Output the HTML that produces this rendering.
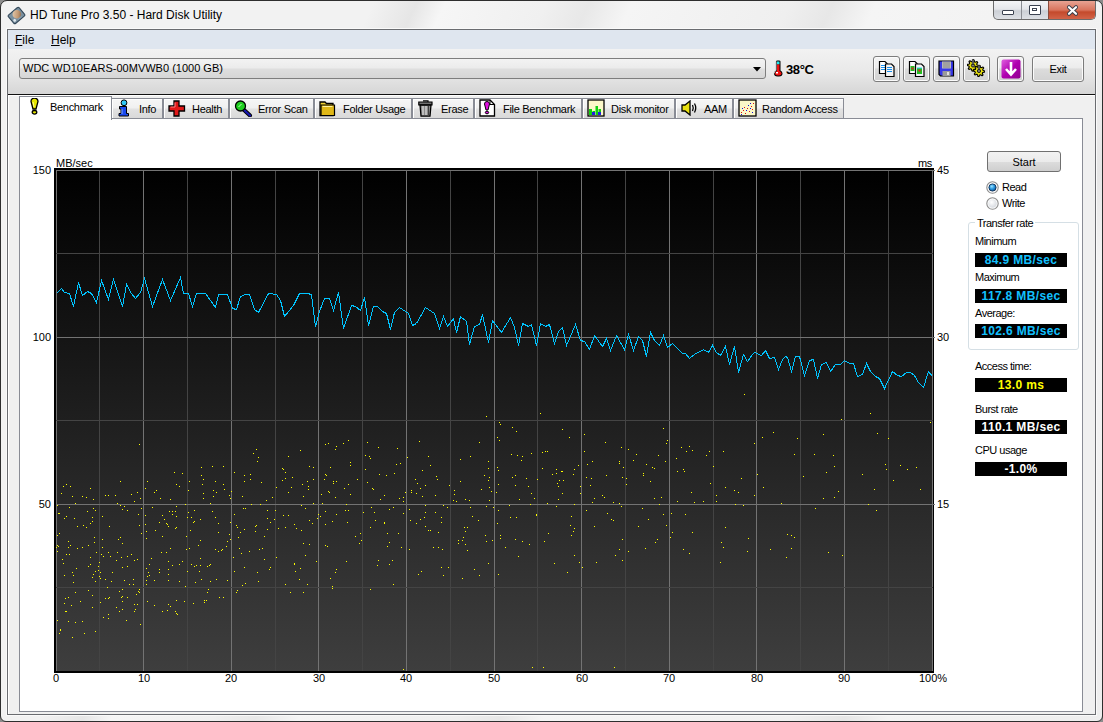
<!DOCTYPE html>
<html><head><meta charset="utf-8">
<style>
*{box-sizing:border-box}
html,body{margin:0;padding:0;width:1103px;height:722px;overflow:hidden;background:#8c8c8c}
body{font-family:"Liberation Sans",sans-serif;font-size:11px;color:#000;position:relative}
.a{position:absolute}
#win{position:absolute;left:0;top:0;width:1103px;height:722px;border:1px solid #2e2e2e;border-radius:7px 7px 6px 6px;background:linear-gradient(115deg,#f2f2f2 0%,#f2f2f2 26%,#e6e6e6 29%,#f6f6f6 31%,#f0f0f0 38%,#e8e8e8 41%,#f5f5f5 44%,#efefef 55%,#e7e7e7 58%,#f5f5f5 61%,#f1f1f1 78%,#e6e6e6 82%,#f4f4f4 85%,#eeeeee)}
#client{position:absolute;left:7px;top:29px;width:1089px;height:686px;border:1px solid #6a6c70;background:#f0f0f0;box-shadow:0 0 0 1px #fafafa, inset 1px 0 0 #fff}
#title{position:absolute;left:30px;top:8px;font-size:12px;color:#000;white-space:nowrap}
#menubar{position:absolute;left:8px;top:30px;width:1087px;height:19px;background:#dfe6ef}
.menu{position:absolute;top:33px;font-size:12px}
#toolbar{position:absolute;left:8px;top:49px;width:1087px;height:46px;background:linear-gradient(#f2f2f2,#e9e9e9 50%,#d6d6d6);border-bottom:1px solid #111}
#tbhl{position:absolute;left:8px;top:95px;width:1087px;height:1px;background:#fff}
#combo{position:absolute;left:19px;top:58px;width:747px;height:21px;border:1px solid #7e7e7e;border-radius:3px;background:linear-gradient(#f3f3f3,#ececec 45%,#dedede 55%,#d6d6d6)}
.tbtn{position:absolute;top:56px;width:27px;height:26px;border:1px solid #7c7c7c;border-radius:3px;background:linear-gradient(#f4f4f4,#ececec 45%,#dcdcdc 50%,#d2d2d2);box-shadow:inset 0 0 0 1px #fbfbfb}
.tab{position:absolute;top:98px;height:21px;border:1px solid #898c95;border-bottom:none;background:linear-gradient(#f6f6f6,#f0f0f0 45%,#e2e2e2 50%,#d8d8d8);box-shadow:inset 1px 1px 0 #fff}
.tab .t{position:absolute;top:3px;white-space:nowrap;font-size:12px}
#panel{position:absolute;left:19px;top:118px;width:1064px;height:594px;border:1px solid #898c95;background:#fff}
.lbl{position:absolute;font-size:11px;letter-spacing:-0.5px;white-space:nowrap}
.box{position:absolute;left:975px;width:92px;height:14px;background:#000;color:#fff;font-weight:bold;font-size:12px;letter-spacing:0.35px;text-align:center;line-height:15px;white-space:nowrap}
.ax{position:absolute;font-size:11px;white-space:nowrap;line-height:11px}
.tl{position:absolute;font-size:11px;letter-spacing:-0.3px;white-space:nowrap}
</style></head><body>
<div id="win"></div>
<!-- window icon -->
<svg class="a" style="left:7px;top:6px" width="19" height="19" viewBox="0 0 19 19">
  <defs><linearGradient id="plat" x1="0" y1="0" x2="1" y2="1"><stop offset="0" stop-color="#e8d2b8"/><stop offset=".6" stop-color="#c49a74"/><stop offset="1" stop-color="#7a5a40"/></linearGradient></defs>
  <g transform="rotate(-40 9.5 9.5)"><rect x="2.5" y="4" width="14" height="11" rx="1.5" fill="#7a90a0" stroke="#34495a" stroke-width="1.1"/><circle cx="10.5" cy="8.8" r="4.3" fill="url(#plat)"/><circle cx="5" cy="12" r="1.4" fill="#dfe8ee"/><path d="M8 13.5 H13" stroke="#8aa0b0" stroke-width="1"/></g>
</svg>
<div id="title">HD Tune Pro 3.50 - Hard Disk Utility</div>
<!-- caption buttons -->
<div class="a" style="left:993px;top:1px;width:103px;height:19px;border:1px solid #6b6b6b;border-top:none;border-radius:0 0 5px 5px;overflow:hidden;background:linear-gradient(#f4f5f7,#e4e6ea 45%,#ccd0d6 55%,#dde0e5)">
  <div class="a" style="left:27px;top:0;width:1px;height:20px;background:#8a8d93"></div>
  <div class="a" style="left:54px;top:0;width:49px;height:20px;background:linear-gradient(#e8a393,#d9745d 45%,#c44a2c 55%,#d66a50);border-left:1px solid #8a4c3c"></div>
  <div class="a" style="left:8px;top:9px;width:12px;height:5px;border:1.5px solid #3b4250;border-radius:1px;background:#fff"></div>
  <div class="a" style="left:35px;top:4px;width:12px;height:10px;border:1.5px solid #3b4250;border-radius:1px;background:#fff"><div class="a" style="left:2px;top:2px;width:5px;height:3px;border:1px solid #3b4250"></div></div>
  <svg class="a" style="left:72px;top:3px" width="13" height="13" viewBox="0 0 13 13"><path d="M3 3.2 L10 9.8 M10 3.2 L3 9.8" stroke="#3a3f4a" stroke-width="4" stroke-linecap="round"/><path d="M3 3.2 L10 9.8 M10 3.2 L3 9.8" stroke="#fff" stroke-width="2.2" stroke-linecap="round"/></svg>
</div>

<div id="client"></div>
<div id="menubar"></div>
<div class="menu" style="left:15px"><u>F</u>ile</div>
<div class="menu" style="left:51px"><u>H</u>elp</div>
<div id="toolbar"></div><div id="tbhl"></div>
<div id="combo"></div>
<div class="a" style="left:23px;top:62px;font-size:11px;white-space:nowrap">WDC WD10EARS-00MVWB0 (1000 GB)</div>
<svg class="a" style="left:753px;top:67px" width="9" height="6"><path d="M0 0H8L4 4.5Z" fill="#000"/></svg>
<!-- thermometer -->
<svg class="a" style="left:773px;top:60px" width="10" height="17" viewBox="0 0 10 17">
  <path d="M3 1.5 Q3 0.5 4.5 0.5 H6 Q7.5 0.5 7.5 1.5 V10.5 Q9.5 11.5 9.5 13.5 Q9.5 16.5 6 16.5 H4.5 Q1 16.5 1 13.5 Q1 11.5 3 10.5 Z" fill="#000"/>
  <rect x="4" y="1.5" width="2.5" height="3" fill="#20e8f0"/><rect x="4" y="4.5" width="2.5" height="7" fill="#f01010"/>
  <path d="M2 13.5 Q2 11.5 4 11 H6.5 Q8.5 11.5 8.5 13.5 Q8.5 15.5 6 15.5 H4.5 Q2 15.5 2 13.5Z" fill="#f01010"/>
  <path d="M3 1.5 V10.5 Q1 11.5 1 13.5" stroke="#c8c8c8" stroke-width="1" fill="none"/><rect x="3" y="12" width="2" height="1.5" fill="#fff"/>
</svg>
<div class="a" style="left:786px;top:62px;font-size:13px;font-weight:bold;letter-spacing:-0.4px">38°C</div>
<div class="tbtn" style="left:873px"></div>
<div class="tbtn" style="left:903px"></div>
<div class="tbtn" style="left:933px"></div>
<div class="tbtn" style="left:963px"></div>
<div class="tbtn" style="left:997px"></div>
<svg class="a" style="left:878px;top:60px" width="18" height="18" viewBox="0 0 18 18"><path d="M1.5 1.5 H7 L9 3.5 V13.5 H1.5 Z" fill="#fff" stroke="#000" stroke-width="1.2"/><path d="M2.5 5.5 H6.5 M2.5 7.5 H6.5 M2.5 9.5 H6.5" stroke="#1890f0" stroke-width="1" shape-rendering="crispEdges"/><path d="M7.5 4 H13.5 L16 6.5 V16.5 H7.5 Z" fill="#f4f4f4" stroke="#000" stroke-width="1.2"/><path d="M9 7.5 H14 M9 9.5 H14 M9 11.5 H14" stroke="#1890f0" stroke-width="1" shape-rendering="crispEdges"/></svg>
<svg class="a" style="left:908px;top:60px" width="18" height="18" viewBox="0 0 18 18"><path d="M1.5 1.5 H7 L9 3.5 V13.5 H1.5 Z" fill="#fff" stroke="#000" stroke-width="1.2"/><rect x="2.5" y="6" width="4" height="5" fill="#20c020"/><rect x="3.5" y="7.5" width="2" height="2" fill="#e02020"/><path d="M7.5 4 H13.5 L16 6.5 V16.5 H7.5 Z" fill="#f4f4f4" stroke="#000" stroke-width="1.2"/><rect x="9" y="8" width="5" height="6" fill="#20c020"/><rect x="10.5" y="9.5" width="2" height="2" fill="#e02020"/><path d="M9 8 H14" stroke="#30d0f0"/></svg>
<svg class="a" style="left:938px;top:60px" width="17" height="17" viewBox="0 0 17 17"><path d="M1 1 H15.5 V16 H2.5 L1 14.5 Z" fill="#3838e8" stroke="#000" stroke-width="1.2"/><rect x="4" y="1.5" width="9" height="7" fill="#b8b8b8"/><path d="M5 3 H12 M5 5 H12 M5 7 H12" stroke="#888" stroke-width="1"/><rect x="4.5" y="11" width="8" height="5" fill="#9a9a9a"/><rect x="9" y="12" width="2" height="3" fill="#e0e0e0"/></svg>
<svg class="a" style="left:967px;top:59px" width="18" height="18" viewBox="0 0 18 18"><g fill="#e8e010" stroke="#000" stroke-width="1.1" stroke-linejoin="round"><path d="M11.6 6.5 L11.5 7.6 L9.7 8.0 L9.3 8.7 L10.0 10.5 L9.1 11.2 L7.5 10.2 L6.8 10.4 L6.0 12.1 L4.9 12.0 L4.5 10.2 L3.8 9.8 L2.0 10.5 L1.3 9.6 L2.3 8.0 L2.1 7.3 L0.4 6.5 L0.5 5.4 L2.3 5.0 L2.7 4.3 L2.0 2.5 L2.9 1.8 L4.5 2.8 L5.2 2.6 L6.0 0.9 L7.1 1.0 L7.5 2.8 L8.2 3.2 L10.0 2.5 L10.7 3.4 L9.7 5.0 L9.9 5.7Z"/><path d="M17.6 12.0 L17.5 13.1 L15.7 13.5 L15.3 14.2 L16.0 16.0 L15.1 16.7 L13.5 15.7 L12.8 15.9 L12.0 17.6 L10.9 17.5 L10.5 15.7 L9.8 15.3 L8.0 16.0 L7.3 15.1 L8.3 13.5 L8.1 12.8 L6.4 12.0 L6.5 10.9 L8.3 10.5 L8.7 9.8 L8.0 8.0 L8.9 7.3 L10.5 8.3 L11.2 8.1 L12.0 6.4 L13.1 6.5 L13.5 8.3 L14.2 8.7 L16.0 8.0 L16.7 8.9 L15.7 10.5 L15.9 11.2Z"/></g><circle cx="6" cy="6.5" r="1.6" fill="#808080" stroke="#000" stroke-width=".8"/><circle cx="12" cy="12" r="1.6" fill="#808080" stroke="#000" stroke-width=".8"/><path d="M6 0.5 V6 M12 6 V11" stroke="#000" stroke-width="2.2"/><path d="M6 1 V5.5 M12 6.5 V10.5" stroke="#b0b0b0" stroke-width="1"/></svg>
<svg class="a" style="left:1001px;top:59px" width="20" height="20" viewBox="0 0 20 20"><defs><linearGradient id="pg" x1="0" y1="0" x2="1" y2="1"><stop offset="0" stop-color="#e060e0"/><stop offset=".5" stop-color="#b000b0"/><stop offset="1" stop-color="#900090"/></linearGradient></defs><rect x="0.5" y="0.5" width="19" height="19" rx="2" fill="url(#pg)"/><path d="M10 3 V15 M5 10 L10 15.5 L15 10" stroke="#fff" stroke-width="2.6" fill="none"/></svg>
<div class="tbtn" style="left:1032px;width:52px;"><div class="a" style="left:0;width:50px;top:6px;text-align:center;font-size:11px;letter-spacing:-0.3px">Exit</div></div>
<div class="tab" style="left:111px;width:52px"></div>
<div class="tl" style="left:139px;top:103px">Info</div>
<svg class="a" style="left:118px;top:99px" width="12" height="18" viewBox="0 0 12 18"><circle cx="6" cy="3.8" r="2.9" fill="#30c8f8" stroke="#000" stroke-width="1"/><path d="M1.5 7.5 H8.5 V14.5 H10.5 V17 H1 V14.5 H3 V10 H1.5 Z" fill="#1848f0" stroke="#000" stroke-width="1"/><path d="M4 10 V15" stroke="#80a8ff" stroke-width="1"/></svg>
<div class="tab" style="left:163px;width:66px"></div>
<div class="tl" style="left:192px;top:103px">Health</div>
<svg class="a" style="left:168px;top:100px" width="18" height="17" viewBox="0 0 18 17"><path d="M6 1 H11 V6 H16.5 V11 H11 V16 H6 V11 H1 V6 H6 Z" fill="#e01818" stroke="#000" stroke-width="1.3"/><path d="M7 2.5 V7 H2.5" stroke="#ff8080" stroke-width="1" fill="none"/></svg>
<div class="tab" style="left:229px;width:85px"></div>
<div class="tl" style="left:258px;top:103px">Error Scan</div>
<svg class="a" style="left:234px;top:100px" width="19" height="17" viewBox="0 0 19 17"><path d="M9 9 L16 15.5" stroke="#000" stroke-width="4" stroke-linecap="round"/><path d="M9 9 L16 15.5" stroke="#1818b0" stroke-width="2.2" stroke-linecap="round"/><circle cx="6.5" cy="6" r="5" fill="#20d020" stroke="#000" stroke-width="1.3"/><path d="M4.5 7 L7.5 4" stroke="#c0ffc0" stroke-width="1"/></svg>
<div class="tab" style="left:314px;width:98px"></div>
<div class="tl" style="left:343px;top:103px">Folder Usage</div>
<svg class="a" style="left:319px;top:99px" width="17" height="18" viewBox="0 0 17 18"><path d="M1 3 H6 L7.5 4.5 H14 V16.5 H1 Z" fill="#f0d030" stroke="#000" stroke-width="1.3"/><path d="M2 6 H15.5 V16.5 H2 Z" fill="#e0b818" stroke="#000" stroke-width="1.2"/><path d="M3.5 7.5 H13.5" stroke="#fff3a0" stroke-width="1"/></svg>
<div class="tab" style="left:412px;width:62px"></div>
<div class="tl" style="left:441px;top:103px">Erase</div>
<svg class="a" style="left:418px;top:100px" width="15" height="17" viewBox="0 0 15 17"><path d="M0.8 2 H14 V5 H0.8 Z" fill="#707070" stroke="#000" stroke-width="1.2"/><path d="M5 0.8 H10 V2" fill="none" stroke="#000" stroke-width="1.2"/><path d="M2 5 H13 L12 16.2 H3 Z" fill="#8a8a8a" stroke="#000" stroke-width="1.3"/><path d="M5 6 V15 M8 6 V15" stroke="#e0e0e0" stroke-width="1.2"/><path d="M10.5 6 V15" stroke="#404040" stroke-width="1"/></svg>
<div class="tab" style="left:474px;width:108px"></div>
<div class="tl" style="left:503px;top:103px">File Benchmark</div>
<svg class="a" style="left:479px;top:99px" width="17" height="18" viewBox="0 0 17 18"><path d="M1 1 H11 L15.5 5.5 V17 H1 Z" fill="#fff" stroke="#000" stroke-width="1.3"/><path d="M11 1 V5.5 H15.5" fill="none" stroke="#000" stroke-width="1"/><path d="M5.5 5 A2.5 2.5 0 0 1 10.5 5 L9 11 H7 Z" fill="#e010e0" stroke="#000" stroke-width="1"/><ellipse cx="8" cy="13.5" rx="1.7" ry="1.3" fill="#e010e0" stroke="#000" stroke-width="1"/></svg>
<div class="tab" style="left:582px;width:93px"></div>
<div class="tl" style="left:611px;top:103px">Disk monitor</div>
<svg class="a" style="left:587px;top:99px" width="18" height="18" viewBox="0 0 18 18"><rect x="1" y="1" width="16" height="16" fill="#fbf7c8" stroke="#000" stroke-width="1.3"/><path d="M2 10 H5 V16 H2 Z M5.5 12 H8 V16 H5.5 Z M8.5 7 H11 V16 H8.5 Z M11.5 10 H14 V16 H11.5 Z" fill="#10d010"/><path d="M5 13 H8 V16 H5 Z M11 13 H14 V16 H11 Z" fill="#2020e0"/></svg>
<div class="tab" style="left:675px;width:58px"></div>
<div class="tl" style="left:704px;top:103px">AAM</div>
<svg class="a" style="left:681px;top:100px" width="17" height="16" viewBox="0 0 17 16"><path d="M1 5 H4 L9 1 V15 L4 11 H1 Z" fill="#e8e010" stroke="#000" stroke-width="1.3"/><path d="M11.5 5 Q13 8 11.5 11 M13.5 3.5 Q16 8 13.5 12.5" fill="none" stroke="#000" stroke-width="1.3"/></svg>
<div class="tab" style="left:733px;width:111px"></div>
<div class="tl" style="left:762px;top:103px">Random Access</div>
<svg class="a" style="left:738px;top:99px" width="19" height="18" viewBox="0 0 19 18"><rect x="1" y="1" width="17" height="16" fill="#fbf7c8" stroke="#000" stroke-width="1.3"/><path d="M3 13h1v1h-1z M5 11h1v1h-1z M7 14h1v1h-1z M9 9h1v1h-1z M11 12h1v1h-1z M13 7h1v1h-1z M14 10h1v1h-1z M6 8h1v1h-1z M15 4h1v1h-1z" fill="#e01010"/><path d="M4 9h1v1h-1z M8 11h1v1h-1z M10 6h1v1h-1z M12 9h1v1h-1z M14 13h1v1h-1z M12 4h1v1h-1z M3 15h1v1h-1z" fill="#1010e0"/></svg>
<div id="panel"></div>
<div class="a" style="left:19px;top:96px;width:93px;height:24px;border:1px solid #898c95;border-bottom:none;background:#fff"></div><div class="tl" style="left:50px;top:101px">Benchmark</div><svg class="a" style="left:30px;top:98px" width="9" height="17" viewBox="0 0 9 17"><path d="M1 3.5 A3.5 3.5 0 0 1 8 3.5 L6 11 H3 Z" fill="#e8e800" stroke="#000" stroke-width="1.3"/><path d="M3 4 L4 9" stroke="#ffffa0" stroke-width="1"/><ellipse cx="4.5" cy="14.3" rx="2.3" ry="1.8" fill="#e8e800" stroke="#000" stroke-width="1.3"/></svg>
<svg class="a" style="left:0;top:0" width="1103" height="722" shape-rendering="crispEdges">
<defs><linearGradient id="bg" x1="0" y1="0" x2="0" y2="1"><stop offset="0" stop-color="#000"/><stop offset="1" stop-color="#3e3e3e"/></linearGradient></defs>
<rect x="54" y="168" width="880" height="505" fill="#000"/>
<rect x="56" y="170" width="877" height="501" fill="url(#bg)"/>
<rect x="56" y="170" width="1" height="501" fill="#737373"/>
<rect x="99" y="170" width="1" height="501" fill="#444444"/>
<rect x="143" y="170" width="1" height="501" fill="#737373"/>
<rect x="187" y="170" width="1" height="501" fill="#444444"/>
<rect x="231" y="170" width="1" height="501" fill="#737373"/>
<rect x="275" y="170" width="1" height="501" fill="#444444"/>
<rect x="318" y="170" width="1" height="501" fill="#737373"/>
<rect x="362" y="170" width="1" height="501" fill="#444444"/>
<rect x="406" y="170" width="1" height="501" fill="#737373"/>
<rect x="450" y="170" width="1" height="501" fill="#444444"/>
<rect x="494" y="170" width="1" height="501" fill="#737373"/>
<rect x="537" y="170" width="1" height="501" fill="#444444"/>
<rect x="581" y="170" width="1" height="501" fill="#737373"/>
<rect x="625" y="170" width="1" height="501" fill="#444444"/>
<rect x="669" y="170" width="1" height="501" fill="#737373"/>
<rect x="713" y="170" width="1" height="501" fill="#444444"/>
<rect x="756" y="170" width="1" height="501" fill="#737373"/>
<rect x="800" y="170" width="1" height="501" fill="#444444"/>
<rect x="844" y="170" width="1" height="501" fill="#737373"/>
<rect x="888" y="170" width="1" height="501" fill="#444444"/>
<rect x="932" y="170" width="1" height="501" fill="#737373"/>
<rect x="56" y="170" width="879" height="1" fill="#737373"/>
<rect x="56" y="253" width="877" height="1" fill="#444444"/>
<rect x="56" y="337" width="879" height="1" fill="#737373"/>
<rect x="56" y="420" width="877" height="1" fill="#444444"/>
<rect x="56" y="504" width="879" height="1" fill="#737373"/>
<rect x="56" y="587" width="877" height="1" fill="#444444"/>
<path fill="#ffff00" d="M75 622h1v1h-1zM76 568h1v1h-1zM64 575h1v1h-1zM90 523h1v1h-1zM59 533h1v1h-1zM99 576h1v1h-1zM62 559h1v1h-1zM58 513h1v1h-1zM57 545h1v1h-1zM92 577h1v1h-1zM77 548h1v1h-1zM68 621h1v1h-1zM87 511h1v1h-1zM68 597h1v1h-1zM73 582h1v1h-1zM93 508h1v1h-1zM95 631h1v1h-1zM73 575h1v1h-1zM90 488h1v1h-1zM70 545h1v1h-1zM66 484h1v1h-1zM90 564h1v1h-1zM75 592h1v1h-1zM61 493h1v1h-1zM74 518h1v1h-1zM98 570h1v1h-1zM65 611h1v1h-1zM84 633h1v1h-1zM65 598h1v1h-1zM70 486h1v1h-1zM59 513h1v1h-1zM82 547h1v1h-1zM98 566h1v1h-1zM93 499h1v1h-1zM95 510h1v1h-1zM88 566h1v1h-1zM94 542h1v1h-1zM60 629h1v1h-1zM66 516h1v1h-1zM92 521h1v1h-1zM63 486h1v1h-1zM66 611h1v1h-1zM82 621h1v1h-1zM64 518h1v1h-1zM75 503h1v1h-1zM72 496h1v1h-1zM71 605h1v1h-1zM86 497h1v1h-1zM57 620h1v1h-1zM86 527h1v1h-1zM77 526h1v1h-1zM99 562h1v1h-1zM88 590h1v1h-1zM90 557h1v1h-1zM95 571h1v1h-1zM93 574h1v1h-1zM72 572h1v1h-1zM59 633h1v1h-1zM94 537h1v1h-1zM88 545h1v1h-1zM92 595h1v1h-1zM57 551h1v1h-1zM66 554h1v1h-1zM82 496h1v1h-1zM69 507h1v1h-1zM63 563h1v1h-1zM95 581h1v1h-1zM64 603h1v1h-1zM96 552h1v1h-1zM69 554h1v1h-1zM92 607h1v1h-1zM68 547h1v1h-1zM68 541h1v1h-1zM83 525h1v1h-1zM92 517h1v1h-1zM57 535h1v1h-1zM80 601h1v1h-1zM56 547h1v1h-1zM57 505h1v1h-1zM58 546h1v1h-1zM127 597h1v1h-1zM141 508h1v1h-1zM120 481h1v1h-1zM120 505h1v1h-1zM111 581h1v1h-1zM122 589h1v1h-1zM117 552h1v1h-1zM140 498h1v1h-1zM119 611h1v1h-1zM116 607h1v1h-1zM134 560h1v1h-1zM108 598h1v1h-1zM127 510h1v1h-1zM139 589h1v1h-1zM134 611h1v1h-1zM137 492h1v1h-1zM119 591h1v1h-1zM121 597h1v1h-1zM102 516h1v1h-1zM134 501h1v1h-1zM122 601h1v1h-1zM129 584h1v1h-1zM103 556h1v1h-1zM112 572h1v1h-1zM122 543h1v1h-1zM116 560h1v1h-1zM137 559h1v1h-1zM108 552h1v1h-1zM126 620h1v1h-1zM122 596h1v1h-1zM124 580h1v1h-1zM102 539h1v1h-1zM141 533h1v1h-1zM105 598h1v1h-1zM139 525h1v1h-1zM108 614h1v1h-1zM105 495h1v1h-1zM109 526h1v1h-1zM115 495h1v1h-1zM131 554h1v1h-1zM110 556h1v1h-1zM118 539h1v1h-1zM122 509h1v1h-1zM127 556h1v1h-1zM137 604h1v1h-1zM109 597h1v1h-1zM139 525h1v1h-1zM140 624h1v1h-1zM138 514h1v1h-1zM131 494h1v1h-1zM136 594h1v1h-1zM105 579h1v1h-1zM100 578h1v1h-1zM139 525h1v1h-1zM133 579h1v1h-1zM108 495h1v1h-1zM101 554h1v1h-1zM124 506h1v1h-1zM108 618h1v1h-1zM103 617h1v1h-1zM120 537h1v1h-1zM122 567h1v1h-1zM100 602h1v1h-1zM107 587h1v1h-1zM117 503h1v1h-1zM122 609h1v1h-1zM134 604h1v1h-1zM127 566h1v1h-1zM121 557h1v1h-1zM139 592h1v1h-1zM135 609h1v1h-1zM138 591h1v1h-1zM133 584h1v1h-1zM102 547h1v1h-1zM100 572h1v1h-1zM170 606h1v1h-1zM172 565h1v1h-1zM168 526h1v1h-1zM187 571h1v1h-1zM176 516h1v1h-1zM175 528h1v1h-1zM145 524h1v1h-1zM147 601h1v1h-1zM167 610h1v1h-1zM168 574h1v1h-1zM146 580h1v1h-1zM145 515h1v1h-1zM151 558h1v1h-1zM146 538h1v1h-1zM169 511h1v1h-1zM172 511h1v1h-1zM174 472h1v1h-1zM154 492h1v1h-1zM176 600h1v1h-1zM176 613h1v1h-1zM184 601h1v1h-1zM162 611h1v1h-1zM154 605h1v1h-1zM175 611h1v1h-1zM179 486h1v1h-1zM170 499h1v1h-1zM145 488h1v1h-1zM162 536h1v1h-1zM155 530h1v1h-1zM177 614h1v1h-1zM185 504h1v1h-1zM148 572h1v1h-1zM159 569h1v1h-1zM168 561h1v1h-1zM176 506h1v1h-1zM186 536h1v1h-1zM146 531h1v1h-1zM170 548h1v1h-1zM146 568h1v1h-1zM167 524h1v1h-1zM164 519h1v1h-1zM176 484h1v1h-1zM179 581h1v1h-1zM152 507h1v1h-1zM179 564h1v1h-1zM186 549h1v1h-1zM176 527h1v1h-1zM147 481h1v1h-1zM168 569h1v1h-1zM156 490h1v1h-1zM172 514h1v1h-1zM175 511h1v1h-1zM149 575h1v1h-1zM159 572h1v1h-1zM168 604h1v1h-1zM162 515h1v1h-1zM161 552h1v1h-1zM159 522h1v1h-1zM160 498h1v1h-1zM168 569h1v1h-1zM168 580h1v1h-1zM182 473h1v1h-1zM166 552h1v1h-1zM185 586h1v1h-1zM146 584h1v1h-1zM147 576h1v1h-1zM182 561h1v1h-1zM149 564h1v1h-1zM154 580h1v1h-1zM166 523h1v1h-1zM229 534h1v1h-1zM210 564h1v1h-1zM227 580h1v1h-1zM216 579h1v1h-1zM226 546h1v1h-1zM218 523h1v1h-1zM193 603h1v1h-1zM203 493h1v1h-1zM206 600h1v1h-1zM189 481h1v1h-1zM215 481h1v1h-1zM207 592h1v1h-1zM188 490h1v1h-1zM196 565h1v1h-1zM213 490h1v1h-1zM199 571h1v1h-1zM201 579h1v1h-1zM208 589h1v1h-1zM227 541h1v1h-1zM229 495h1v1h-1zM189 548h1v1h-1zM210 503h1v1h-1zM230 498h1v1h-1zM187 517h1v1h-1zM222 549h1v1h-1zM194 510h1v1h-1zM198 545h1v1h-1zM230 539h1v1h-1zM193 522h1v1h-1zM224 489h1v1h-1zM218 532h1v1h-1zM207 566h1v1h-1zM200 558h1v1h-1zM191 517h1v1h-1zM210 581h1v1h-1zM201 475h1v1h-1zM200 565h1v1h-1zM203 479h1v1h-1zM204 600h1v1h-1zM223 466h1v1h-1zM203 498h1v1h-1zM212 466h1v1h-1zM230 522h1v1h-1zM200 540h1v1h-1zM200 519h1v1h-1zM216 492h1v1h-1zM219 597h1v1h-1zM212 511h1v1h-1zM223 484h1v1h-1zM191 564h1v1h-1zM195 582h1v1h-1zM213 496h1v1h-1zM194 521h1v1h-1zM190 530h1v1h-1zM215 549h1v1h-1zM201 467h1v1h-1zM204 602h1v1h-1zM221 550h1v1h-1zM188 512h1v1h-1zM215 517h1v1h-1zM209 565h1v1h-1zM194 566h1v1h-1zM202 484h1v1h-1zM218 551h1v1h-1zM223 597h1v1h-1zM258 457h1v1h-1zM241 553h1v1h-1zM245 508h1v1h-1zM236 525h1v1h-1zM255 531h1v1h-1zM242 585h1v1h-1zM257 572h1v1h-1zM243 508h1v1h-1zM267 529h1v1h-1zM234 472h1v1h-1zM274 519h1v1h-1zM260 504h1v1h-1zM257 461h1v1h-1zM251 504h1v1h-1zM256 525h1v1h-1zM242 496h1v1h-1zM259 549h1v1h-1zM237 527h1v1h-1zM249 551h1v1h-1zM264 559h1v1h-1zM267 510h1v1h-1zM255 526h1v1h-1zM250 474h1v1h-1zM262 548h1v1h-1zM264 536h1v1h-1zM234 514h1v1h-1zM253 453h1v1h-1zM261 482h1v1h-1zM244 481h1v1h-1zM234 571h1v1h-1zM269 569h1v1h-1zM240 532h1v1h-1zM270 567h1v1h-1zM236 592h1v1h-1zM231 491h1v1h-1zM245 583h1v1h-1zM266 500h1v1h-1zM256 449h1v1h-1zM270 522h1v1h-1zM272 497h1v1h-1zM244 529h1v1h-1zM267 518h1v1h-1zM238 537h1v1h-1zM258 581h1v1h-1zM233 557h1v1h-1zM244 567h1v1h-1zM237 590h1v1h-1zM250 479h1v1h-1zM244 475h1v1h-1zM239 548h1v1h-1zM309 544h1v1h-1zM313 479h1v1h-1zM288 515h1v1h-1zM303 592h1v1h-1zM294 524h1v1h-1zM276 487h1v1h-1zM285 472h1v1h-1zM308 486h1v1h-1zM299 579h1v1h-1zM318 514h1v1h-1zM307 584h1v1h-1zM296 528h1v1h-1zM303 543h1v1h-1zM309 520h1v1h-1zM312 523h1v1h-1zM316 561h1v1h-1zM282 480h1v1h-1zM294 563h1v1h-1zM285 478h1v1h-1zM300 450h1v1h-1zM301 530h1v1h-1zM313 467h1v1h-1zM275 510h1v1h-1zM294 564h1v1h-1zM278 528h1v1h-1zM309 466h1v1h-1zM288 492h1v1h-1zM302 484h1v1h-1zM300 568h1v1h-1zM282 468h1v1h-1zM305 508h1v1h-1zM292 477h1v1h-1zM317 518h1v1h-1zM308 489h1v1h-1zM307 481h1v1h-1zM313 503h1v1h-1zM288 456h1v1h-1zM276 557h1v1h-1zM285 527h1v1h-1zM285 584h1v1h-1zM290 592h1v1h-1zM301 505h1v1h-1zM303 496h1v1h-1zM305 555h1v1h-1zM295 571h1v1h-1zM291 487h1v1h-1zM283 469h1v1h-1zM283 515h1v1h-1zM332 588h1v1h-1zM348 484h1v1h-1zM321 494h1v1h-1zM330 467h1v1h-1zM330 578h1v1h-1zM350 494h1v1h-1zM325 524h1v1h-1zM350 465h1v1h-1zM335 572h1v1h-1zM333 483h1v1h-1zM336 446h1v1h-1zM325 444h1v1h-1zM332 521h1v1h-1zM324 479h1v1h-1zM350 462h1v1h-1zM327 546h1v1h-1zM336 569h1v1h-1zM328 491h1v1h-1zM328 443h1v1h-1zM346 561h1v1h-1zM361 540h1v1h-1zM359 543h1v1h-1zM347 522h1v1h-1zM346 504h1v1h-1zM335 497h1v1h-1zM333 481h1v1h-1zM325 511h1v1h-1zM326 475h1v1h-1zM322 503h1v1h-1zM325 545h1v1h-1zM343 443h1v1h-1zM335 449h1v1h-1zM336 514h1v1h-1zM344 488h1v1h-1zM329 492h1v1h-1zM357 479h1v1h-1zM348 510h1v1h-1zM345 510h1v1h-1zM360 533h1v1h-1zM336 481h1v1h-1zM355 536h1v1h-1zM320 516h1v1h-1zM332 586h1v1h-1zM325 474h1v1h-1zM348 440h1v1h-1zM386 475h1v1h-1zM384 522h1v1h-1zM389 564h1v1h-1zM405 492h1v1h-1zM401 547h1v1h-1zM393 584h1v1h-1zM398 533h1v1h-1zM384 495h1v1h-1zM375 520h1v1h-1zM372 488h1v1h-1zM370 458h1v1h-1zM365 455h1v1h-1zM393 507h1v1h-1zM396 464h1v1h-1zM400 463h1v1h-1zM384 523h1v1h-1zM373 489h1v1h-1zM377 565h1v1h-1zM387 546h1v1h-1zM389 509h1v1h-1zM379 474h1v1h-1zM370 527h1v1h-1zM403 501h1v1h-1zM380 499h1v1h-1zM403 497h1v1h-1zM367 482h1v1h-1zM394 473h1v1h-1zM363 512h1v1h-1zM378 560h1v1h-1zM399 498h1v1h-1zM389 542h1v1h-1zM392 560h1v1h-1zM369 456h1v1h-1zM403 513h1v1h-1zM367 442h1v1h-1zM387 533h1v1h-1zM374 512h1v1h-1zM378 447h1v1h-1zM365 469h1v1h-1zM370 589h1v1h-1zM371 507h1v1h-1zM397 448h1v1h-1zM430 530h1v1h-1zM418 574h1v1h-1zM425 505h1v1h-1zM407 457h1v1h-1zM409 549h1v1h-1zM419 441h1v1h-1zM415 479h1v1h-1zM441 522h1v1h-1zM441 567h1v1h-1zM410 520h1v1h-1zM417 483h1v1h-1zM416 493h1v1h-1zM435 512h1v1h-1zM421 571h1v1h-1zM420 488h1v1h-1zM438 547h1v1h-1zM430 465h1v1h-1zM411 490h1v1h-1zM425 512h1v1h-1zM424 517h1v1h-1zM448 567h1v1h-1zM420 519h1v1h-1zM425 485h1v1h-1zM437 479h1v1h-1zM436 476h1v1h-1zM422 496h1v1h-1zM422 470h1v1h-1zM433 547h1v1h-1zM428 456h1v1h-1zM443 505h1v1h-1zM435 495h1v1h-1zM416 523h1v1h-1zM428 530h1v1h-1zM425 526h1v1h-1zM447 507h1v1h-1zM449 485h1v1h-1zM438 532h1v1h-1zM411 492h1v1h-1zM443 575h1v1h-1zM442 549h1v1h-1zM409 509h1v1h-1zM441 517h1v1h-1zM488 480h1v1h-1zM478 520h1v1h-1zM484 475h1v1h-1zM485 535h1v1h-1zM489 477h1v1h-1zM454 490h1v1h-1zM488 461h1v1h-1zM467 550h1v1h-1zM453 500h1v1h-1zM488 468h1v1h-1zM479 442h1v1h-1zM465 531h1v1h-1zM462 540h1v1h-1zM458 540h1v1h-1zM470 456h1v1h-1zM491 491h1v1h-1zM458 543h1v1h-1zM465 499h1v1h-1zM456 501h1v1h-1zM486 506h1v1h-1zM472 516h1v1h-1zM460 481h1v1h-1zM488 563h1v1h-1zM479 575h1v1h-1zM467 527h1v1h-1zM469 500h1v1h-1zM462 578h1v1h-1zM463 537h1v1h-1zM460 459h1v1h-1zM489 500h1v1h-1zM465 544h1v1h-1zM474 569h1v1h-1zM454 494h1v1h-1zM481 489h1v1h-1zM489 487h1v1h-1zM470 507h1v1h-1zM464 527h1v1h-1zM492 540h1v1h-1zM486 541h1v1h-1zM493 507h1v1h-1zM511 454h1v1h-1zM537 479h1v1h-1zM500 538h1v1h-1zM497 523h1v1h-1zM521 460h1v1h-1zM529 544h1v1h-1zM499 422h1v1h-1zM531 493h1v1h-1zM509 505h1v1h-1zM498 484h1v1h-1zM499 440h1v1h-1zM497 467h1v1h-1zM528 486h1v1h-1zM496 492h1v1h-1zM518 556h1v1h-1zM498 510h1v1h-1zM516 517h1v1h-1zM531 453h1v1h-1zM500 535h1v1h-1zM500 424h1v1h-1zM498 574h1v1h-1zM522 456h1v1h-1zM497 437h1v1h-1zM534 498h1v1h-1zM522 541h1v1h-1zM515 475h1v1h-1zM526 478h1v1h-1zM512 477h1v1h-1zM512 427h1v1h-1zM530 504h1v1h-1zM517 455h1v1h-1zM498 470h1v1h-1zM515 539h1v1h-1zM515 485h1v1h-1zM536 514h1v1h-1zM536 515h1v1h-1zM510 517h1v1h-1zM519 499h1v1h-1zM516 431h1v1h-1zM505 547h1v1h-1zM556 473h1v1h-1zM567 572h1v1h-1zM574 469h1v1h-1zM573 474h1v1h-1zM571 516h1v1h-1zM561 471h1v1h-1zM578 465h1v1h-1zM570 525h1v1h-1zM580 486h1v1h-1zM557 483h1v1h-1zM556 469h1v1h-1zM569 437h1v1h-1zM574 504h1v1h-1zM542 468h1v1h-1zM579 562h1v1h-1zM547 503h1v1h-1zM574 555h1v1h-1zM558 486h1v1h-1zM554 563h1v1h-1zM559 480h1v1h-1zM571 535h1v1h-1zM545 451h1v1h-1zM552 474h1v1h-1zM563 480h1v1h-1zM562 493h1v1h-1zM558 499h1v1h-1zM548 533h1v1h-1zM562 429h1v1h-1zM573 531h1v1h-1zM556 506h1v1h-1zM580 493h1v1h-1zM547 451h1v1h-1zM574 528h1v1h-1zM562 471h1v1h-1zM544 541h1v1h-1zM542 452h1v1h-1zM605 442h1v1h-1zM615 555h1v1h-1zM622 477h1v1h-1zM623 467h1v1h-1zM619 463h1v1h-1zM592 502h1v1h-1zM592 461h1v1h-1zM587 464h1v1h-1zM594 498h1v1h-1zM619 549h1v1h-1zM619 503h1v1h-1zM613 520h1v1h-1zM621 447h1v1h-1zM622 539h1v1h-1zM591 478h1v1h-1zM613 502h1v1h-1zM596 562h1v1h-1zM586 477h1v1h-1zM621 506h1v1h-1zM586 510h1v1h-1zM584 434h1v1h-1zM582 567h1v1h-1zM611 519h1v1h-1zM584 451h1v1h-1zM604 497h1v1h-1zM590 485h1v1h-1zM602 495h1v1h-1zM606 475h1v1h-1zM594 526h1v1h-1zM622 560h1v1h-1zM619 461h1v1h-1zM607 513h1v1h-1zM652 467h1v1h-1zM667 440h1v1h-1zM663 428h1v1h-1zM661 497h1v1h-1zM650 481h1v1h-1zM628 551h1v1h-1zM643 473h1v1h-1zM626 484h1v1h-1zM648 519h1v1h-1zM645 548h1v1h-1zM633 460h1v1h-1zM646 464h1v1h-1zM654 498h1v1h-1zM636 454h1v1h-1zM638 526h1v1h-1zM654 468h1v1h-1zM658 455h1v1h-1zM643 475h1v1h-1zM665 461h1v1h-1zM659 504h1v1h-1zM642 508h1v1h-1zM657 539h1v1h-1zM626 478h1v1h-1zM628 449h1v1h-1zM663 514h1v1h-1zM666 525h1v1h-1zM666 443h1v1h-1zM655 542h1v1h-1zM689 446h1v1h-1zM681 447h1v1h-1zM684 471h1v1h-1zM677 501h1v1h-1zM692 532h1v1h-1zM692 450h1v1h-1zM672 532h1v1h-1zM709 451h1v1h-1zM683 469h1v1h-1zM703 501h1v1h-1zM706 455h1v1h-1zM710 483h1v1h-1zM686 451h1v1h-1zM676 458h1v1h-1zM670 537h1v1h-1zM691 492h1v1h-1zM677 471h1v1h-1zM671 513h1v1h-1zM685 514h1v1h-1zM683 549h1v1h-1zM694 502h1v1h-1zM689 553h1v1h-1zM723 547h1v1h-1zM720 562h1v1h-1zM725 527h1v1h-1zM723 451h1v1h-1zM754 443h1v1h-1zM743 505h1v1h-1zM734 490h1v1h-1zM713 466h1v1h-1zM738 492h1v1h-1zM716 495h1v1h-1zM741 478h1v1h-1zM716 501h1v1h-1zM747 551h1v1h-1zM735 504h1v1h-1zM754 495h1v1h-1zM725 487h1v1h-1zM721 542h1v1h-1zM748 538h1v1h-1zM791 535h1v1h-1zM791 535h1v1h-1zM770 549h1v1h-1zM757 474h1v1h-1zM791 548h1v1h-1zM797 438h1v1h-1zM786 557h1v1h-1zM794 454h1v1h-1zM787 534h1v1h-1zM762 437h1v1h-1zM794 537h1v1h-1zM781 503h1v1h-1zM773 432h1v1h-1zM763 487h1v1h-1zM834 497h1v1h-1zM814 454h1v1h-1zM828 552h1v1h-1zM815 508h1v1h-1zM842 555h1v1h-1zM834 466h1v1h-1zM823 434h1v1h-1zM838 491h1v1h-1zM833 455h1v1h-1zM826 472h1v1h-1zM803 476h1v1h-1zM823 498h1v1h-1zM862 474h1v1h-1zM886 469h1v1h-1zM874 489h1v1h-1zM885 464h1v1h-1zM888 438h1v1h-1zM877 433h1v1h-1zM868 504h1v1h-1zM876 510h1v1h-1zM916 467h1v1h-1zM907 469h1v1h-1zM930 422h1v1h-1zM900 465h1v1h-1zM893 480h1v1h-1zM920 489h1v1h-1zM486 416h1v1h-1zM540 413h1v1h-1zM744 394h1v1h-1zM870 413h1v1h-1zM841 419h1v1h-1zM532 667h1v1h-1zM543 667h1v1h-1zM614 667h1v1h-1zM403 669h1v1h-1zM139 444h1v1h-1zM72 637h1v1h-1zM60 630h1v1h-1z"/>
<polyline points="56.5,293.5 61.5,288.5 64.5,292.5 69.5,293.5 73.5,306.5 78.5,282.5 82.5,295.5 87.5,291.5 91.5,293.5 96.5,302.5 101.5,280.5 108.5,299.5 113.5,279.5 122.5,306.5 126.5,284.5 131.5,293.5 135.5,298.5 140.5,292.5 144.5,278.5 152.5,306.5 162.5,279.5 170.5,300.5 180.5,277.5 183.5,293.5 188.5,293.5 192.5,306.5 196.5,293.5 205.5,293.5 215.5,307.5 218.5,294.5 227.5,294.5 232.5,308.5 236.5,309.5 240.5,296.5 245.5,294.5 249.5,294.5 254.5,309.5 258.5,312.5 268.5,293.5 276.5,294.5 280.5,300.5 284.5,316.5 293.5,305.5 299.5,293.5 307.5,293.5 311.5,294.5 315.5,326.5 319.5,311.5 324.5,298.5 329.5,298.5 333.5,310.5 338.5,292.5 343.5,328.5 351.5,305.5 355.5,306.5 360.5,310.5 364.5,297.5 368.5,325.5 373.5,306.5 377.5,306.5 382.5,311.5 386.5,313.5 390.5,329.5 394.5,312.5 399.5,307.5 405.5,311.5 408.5,313.5 412.5,325.5 416.5,323.5 425.5,307.5 434.5,313.5 439.5,328.5 443.5,316.5 447.5,326.5 453.5,318.5 456.5,332.5 460.5,316.5 466.5,321.5 469.5,344.5 474.5,326.5 479.5,324.5 482.5,314.5 488.5,342.5 492.5,320.5 501.5,332.5 510.5,317.5 514.5,327.5 518.5,345.5 522.5,323.5 528.5,326.5 531.5,324.5 536.5,345.5 540.5,323.5 545.5,326.5 549.5,324.5 554.5,343.5 558.5,331.5 562.5,327.5 566.5,345.5 575.5,324.5 580.5,340.5 584.5,341.5 589.5,349.5 594.5,335.5 602.5,346.5 606.5,338.5 610.5,350.5 616.5,335.5 624.5,349.5 628.5,334.5 633.5,350.5 638.5,336.5 642.5,340.5 646.5,356.5 650.5,332.5 654.5,340.5 659.5,345.5 663.5,335.5 667.5,347.5 672.5,343.5 682.5,353.5 685.5,353.5 689.5,358.5 695.5,353.5 698.5,352.5 703.5,349.5 708.5,352.5 712.5,345.5 716.5,352.5 720.5,355.5 725.5,346.5 729.5,364.5 734.5,346.5 738.5,372.5 743.5,354.5 747.5,361.5 752.5,354.5 754.5,352.5 761.5,355.5 765.5,350.5 769.5,358.5 774.5,357.5 778.5,369.5 782.5,359.5 785.5,356.5 787.5,357.5 791.5,371.5 795.5,356.5 799.5,356.5 804.5,375.5 809.5,360.5 813.5,359.5 817.5,378.5 821.5,364.5 826.5,362.5 830.5,371.5 835.5,364.5 840.5,364.5 844.5,360.5 849.5,363.5 853.5,363.5 857.5,376.5 862.5,374.5 866.5,363.5 870.5,371.5 875.5,376.5 879.5,378.5 884.5,388.5 892.5,371.5 897.5,375.5 901.5,376.5 906.5,372.5 910.5,372.5 914.5,375.5 918.5,382.5 923.5,387.5 928.5,371.5 932.5,376.5" fill="none" stroke="#00c4ff" stroke-width="1" shape-rendering="crispEdges"/>
</svg>
<div class="ax" style="left:56px;top:158px">MB/sec</div>
<div class="ax" style="left:918px;top:158px;letter-spacing:-0.3px">ms</div>
<div class="ax" style="left:0;width:51px;text-align:right;top:165px">150</div>
<div class="ax" style="left:0;width:51px;text-align:right;top:332px">100</div>
<div class="ax" style="left:0;width:51px;text-align:right;top:499px">50</div>
<div class="ax" style="left:937px;top:165px">45</div>
<div class="ax" style="left:937px;top:332px">30</div>
<div class="ax" style="left:937px;top:499px">15</div>
<div class="ax" style="left:36px;width:40px;text-align:center;top:673px">0</div>
<div class="ax" style="left:124px;width:40px;text-align:center;top:673px">10</div>
<div class="ax" style="left:211px;width:40px;text-align:center;top:673px">20</div>
<div class="ax" style="left:299px;width:40px;text-align:center;top:673px">30</div>
<div class="ax" style="left:386px;width:40px;text-align:center;top:673px">40</div>
<div class="ax" style="left:474px;width:40px;text-align:center;top:673px">50</div>
<div class="ax" style="left:562px;width:40px;text-align:center;top:673px">60</div>
<div class="ax" style="left:649px;width:40px;text-align:center;top:673px">70</div>
<div class="ax" style="left:737px;width:40px;text-align:center;top:673px">80</div>
<div class="ax" style="left:824px;width:40px;text-align:center;top:673px">90</div>
<div class="ax" style="left:919px;top:673px">100%</div>
<div class="a" style="left:987px;top:151px;width:74px;height:21px;border:1px solid #707070;border-radius:3px;background:linear-gradient(#f2f2f2,#ebebeb 50%,#dddddd 51%,#cfcfcf)"><div class="a" style="left:0;width:72px;top:4px;text-align:center;font-size:11px">Start</div></div>
<svg class="a" style="left:986px;top:181px" width="13" height="13"><defs><radialGradient id="rb" cx=".4" cy=".35" r=".7"><stop offset="0" stop-color="#9ee4ff"/><stop offset=".5" stop-color="#2a98e0"/><stop offset="1" stop-color="#0a4e90"/></radialGradient><radialGradient id="rw" cx=".4" cy=".35" r=".7"><stop offset="0" stop-color="#ffffff"/><stop offset="1" stop-color="#d4d8de"/></radialGradient></defs><circle cx="6.5" cy="6.5" r="5.7" fill="#fff" stroke="#8c8c8c" stroke-width="1.1"/><circle cx="6.5" cy="6.5" r="3.6" fill="url(#rb)" stroke="#0c2a50" stroke-width="0.9"/></svg>
<div class="lbl" style="left:1002px;top:181px">Read</div>
<svg class="a" style="left:986px;top:197px" width="13" height="13"><circle cx="6.5" cy="6.5" r="5.7" fill="#fff" stroke="#8c8c8c" stroke-width="1.1"/><circle cx="6.5" cy="6.5" r="4.3" fill="url(#rw)"/></svg>
<div class="lbl" style="left:1002px;top:197px">Write</div>
<div class="a" style="left:968px;top:222px;width:111px;height:128px;border:1px solid #d5dfe5;border-radius:3px"></div>
<div class="lbl" style="left:975px;top:217px;background:#fff;padding:0 2px">Transfer rate</div>
<div class="lbl" style="left:975px;top:235px">Minimum</div>
<div class="box" style="top:253px;color:#12c0ff">84.9 MB/sec</div>
<div class="lbl" style="left:975px;top:271px">Maximum</div>
<div class="box" style="top:289px;color:#12c0ff">117.8 MB/sec</div>
<div class="lbl" style="left:975px;top:307px">Average:</div>
<div class="box" style="top:324px;color:#12c0ff">102.6 MB/sec</div>
<div class="lbl" style="left:975px;top:360px">Access time:</div>
<div class="box" style="top:378px;color:#ffff00">13.0 ms</div>
<div class="lbl" style="left:975px;top:403px">Burst rate</div>
<div class="box" style="top:420px">110.1 MB/sec</div>
<div class="lbl" style="left:975px;top:444px">CPU usage</div>
<div class="box" style="top:462px">-1.0%</div>
</body></html>
